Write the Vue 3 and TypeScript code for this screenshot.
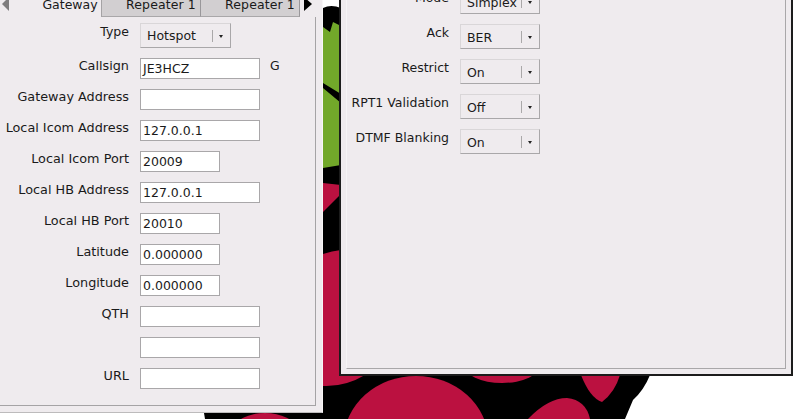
<template>
  <div class="desktop">
    <svg class="wallpaper" width="799" height="419" viewBox="0 0 799 419">
      <path d="M205 419 L204 413 L323 413 L323 8 Q331 4 341 8 L341 375 L650 375 Q644 390 633 400 L625 419 Z" fill="#000" />
      <path d="M323 27 L330 32 L333 22 L341 26 V94 L323 83 Z M323 88 L341 103 V165 L323 168 Z" fill="#72a82a" />
      <path d="M323 183 L341 185 V194 L323 212 Z" fill="#bb1140" />
      <path d="M323 254 Q332 251 341 250 V375 H365 Q345 387 323 386 Z" fill="#bb1140" />
      <ellipse cx="502" cy="365" rx="38" ry="18" fill="#bb1140" />
      <path d="M581 375 H620 Q615 392 602 402 Q590 398 581 375 Z" fill="#bb1140" />
      <ellipse cx="416" cy="440" rx="72" ry="64" fill="#bb1140" />
      <path d="M528 419 Q548 398 567 398 Q586 400 590 419 Z" fill="#bb1140" />
      <ellipse cx="265" cy="428" rx="30" ry="15" fill="#bb1140" />
    </svg>

    <section class="window left-window">
      <div class="tab-bar">
        <span class="tab-arrow arrow-left"></span>
        <div class="tab tab-active">Gateway</div>
        <div class="tab">Repeater 1</div>
        <div class="tab">Repeater 1</div>
        <span class="tab-arrow arrow-right"></span>
      </div>
      <div class="panel left-panel">
        <div class="form-row type-row">
          <label>Type</label>
          <div class="combo combo-wide"><span>Hotspot</span><i></i></div>
        </div>
        <div v-for="field in gatewayFields" :key="field.label + field.value" class="form-row entry-row">
          <label>{{ field.label }}</label>
          <div class="entry" :class="{ short: field.short }">{{ field.value }}</div>
          <span v-if="field.suffix" class="suffix">{{ field.suffix }}</span>
        </div>
      </div>
    </section>

    <section class="window right-window">
      <div class="panel right-panel">
        <div v-for="row in repeaterRows" :key="row.label" class="form-row combo-row">
          <label>{{ row.label }}</label>
          <div class="combo"><span>{{ row.value }}</span><i></i></div>
        </div>
      </div>
    </section>
  </div>
</template>

<script setup lang="ts">
interface GatewayField {
  label: string
  value: string
  short?: boolean
  suffix?: string
}

const gatewayFields: GatewayField[] = [
  { label: 'Callsign', value: 'JE3HCZ', suffix: 'G' },
  { label: 'Gateway Address', value: '' },
  { label: 'Local Icom Address', value: '127.0.0.1' },
  { label: 'Local Icom Port', value: '20009', short: true },
  { label: 'Local HB Address', value: '127.0.0.1' },
  { label: 'Local HB Port', value: '20010', short: true },
  { label: 'Latitude', value: '0.000000', short: true },
  { label: 'Longitude', value: '0.000000', short: true },
  { label: 'QTH', value: '' },
  { label: '', value: '' },
  { label: 'URL', value: '' },
]

const repeaterRows = [
  { label: 'Mode', value: 'Simplex' },
  { label: 'Ack', value: 'BER' },
  { label: 'Restrict', value: 'On' },
  { label: 'RPT1 Validation', value: 'Off' },
  { label: 'DTMF Blanking', value: 'On' },
]
</script>

<style scoped>
.desktop {
  position: relative;
  width: 799px;
  height: 419px;
  overflow: hidden;
  background: #fff;
  font-family: "DejaVu Sans", sans-serif;
  font-size: 12.5px;
  color: #1a1a1a;
}

.wallpaper {
  position: absolute;
  left: 0;
  top: 0;
}

.window {
  position: absolute;
  box-sizing: border-box;
  background: #efebee;
}

.left-window {
  left: 0;
  top: 0;
  width: 323px;
  height: 413px;
  padding-right: 6px;
  border-right: 1px solid #f8f6f7;
  border-bottom: 1px solid #bdbbbc;
}

.tab-bar {
  display: flex;
  height: 17px;
  align-items: flex-end;
}

.tab {
  box-sizing: border-box;
  width: 99px;
  height: 17px;
  padding-left: 20px;
  line-height: 9px;
  text-align: center;
  background: #d2cfd1;
  border-right: 1px solid #99979a;
  border-bottom: 1px solid #a9a7a9;
  letter-spacing: 0.1px;
}

.tab-active {
  width: 87px;
  padding-left: 24px;
  background: #efebee;
  border-bottom: none;
  border-right-color: #a5a3a5;
  letter-spacing: 0;
}

.tab-arrow {
  width: 0;
  height: 0;
  align-self: flex-start;
  margin-top: -3px;
  border-top: 7px solid transparent;
  border-bottom: 7px solid transparent;
}

.arrow-left {
  margin-left: 2px;
  margin-right: 6px;
  border-right: 7px solid #7f7d7e;
}

.arrow-right {
  margin-left: 4px;
  border-left: 8px solid #000;
}

.panel {
  box-sizing: border-box;
  background: #efebee;
}

.left-panel {
  height: 389px;
  padding-top: 6px;
  border-right: 1px solid #a5a3a5;
  border-bottom: 1px solid #a5a3a5;
  display: flex;
  flex-direction: column;
}

.form-row {
  display: flex;
  align-items: flex-start;
  height: 31px;
  flex-shrink: 0;
}

.form-row label {
  width: 129px;
  margin-right: 11px;
  text-align: right;
  line-height: 17px;
  white-space: nowrap;
  flex-shrink: 0;
}

.type-row {
  height: 35px;
}

.entry-row label {
  margin-top: -1px;
  font-size: 12.8px;
}

.entry {
  box-sizing: border-box;
  width: 120px;
  height: 21px;
  padding: 1px 0 0 2px;
  line-height: 17px;
  background: #fff;
  border: 1px solid #a9a7a9;
}

.entry.short {
  width: 80px;
}

.suffix {
  margin-top: -1px;
  margin-left: 10px;
  line-height: 17px;
}

.combo {
  box-sizing: border-box;
  position: relative;
  display: flex;
  align-items: center;
  width: 80px;
  height: 25px;
  padding: 2px 0 0 6px;
  background: #efebee;
  border: 1px solid #d9d6d8;
  border-right-color: #a9a7a9;
  border-bottom: 1px solid #a9a7a9;
}

.combo-wide {
  width: 91px;
  padding-top: 0;
}

.combo i {
  position: absolute;
  right: 17px;
  top: 6px;
  height: 12px;
  border-left: 1px solid #aaa8a9;
}

.combo i::after {
  content: "";
  position: absolute;
  left: 6px;
  top: 5px;
  border-top: 3px solid #222;
  border-left: 2.5px solid transparent;
  border-right: 2.5px solid transparent;
}

.right-window {
  left: 339px;
  top: 0;
  width: 454px;
  height: 376px;
  padding: 0 5px 5px 5px;
  border-right: 2px solid #1c1c1c;
  border-bottom: 2px solid #1c1c1c;
  border-left: 2px solid #1c1c1c;
}

.right-panel {
  margin-top: -11px;
  height: calc(100% + 11px);
  border-right: 1px solid #a9a7a9;
  border-bottom: 1px solid #a9a7a9;
  border-left: 1px solid #f6f4f5;
}

.combo-row {
  height: 35px;
}

.combo-row label {
  width: 102px;
  margin-right: 11px;
}
</style>

<style>
html,
body {
  margin: 0;
  background: #fff;
}
</style>
